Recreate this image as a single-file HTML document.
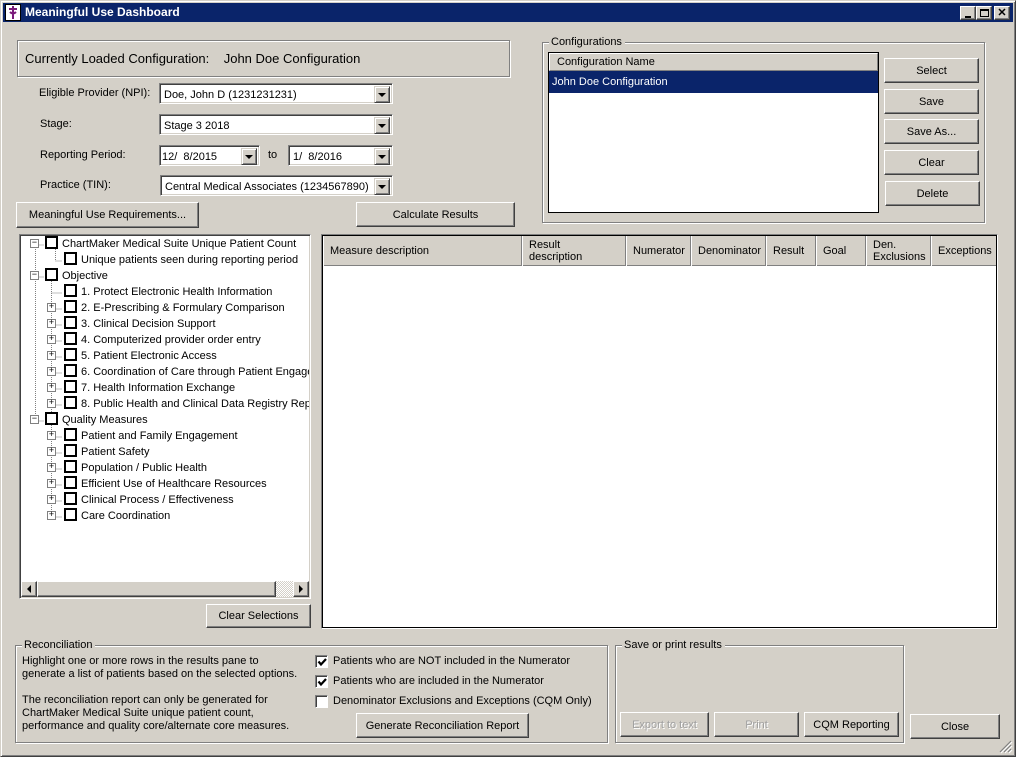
<!DOCTYPE html>
<html><head><meta charset="utf-8">
<style>
*{box-sizing:border-box;margin:0;padding:0}
body{width:1016px;height:757px;background:#d4d0c8;font-family:"Liberation Sans",sans-serif;font-size:11px;color:#000;position:relative;overflow:hidden}
.a{position:absolute}
.win{left:0;top:0;width:1016px;height:757px;border:1px solid;border-color:#d4d0c8 #404040 #404040 #d4d0c8;box-shadow:inset 1px 1px 0 #fff,inset -1px -1px 0 #808080}
.title{left:3px;top:3px;width:1010px;height:19px;background:#0a246a;color:#fff;font-weight:bold;font-size:12px;line-height:19px;padding-left:22px}
.btn{position:absolute;background:#d4d0c8;border:1px solid;border-color:#fff #404040 #404040 #fff;box-shadow:inset -1px -1px 0 #808080;text-align:center;display:flex;align-items:center;justify-content:center;font-size:11px}
.dis{color:#a0a0a0;text-shadow:1px 1px 0 #fff}
.sunk{position:absolute;border:1px solid;border-color:#808080 #fff #fff #808080;box-shadow:inset 1px 1px 0 #404040,inset -1px -1px 0 #d4d0c8;background:#fff}
.combo{height:21px;line-height:20px;padding-left:4px;padding-top:1px}
.dd{position:absolute;right:2px;top:2px;width:16px;height:17px;background:#d4d0c8;border:1px solid;border-color:#d4d0c8 #404040 #404040 #d4d0c8;box-shadow:inset 1px 1px 0 #fff,inset -1px -1px 0 #808080}
.dd:after{content:"";position:absolute;left:3px;top:6px;border-left:4px solid transparent;border-right:4px solid transparent;border-top:4px solid #000}
.grp{position:absolute;border:1px solid #808080;box-shadow:1px 1px 0 #fff,inset 1px 1px 0 #fff}
.gl{position:absolute;background:#d4d0c8;padding:0 3px 0 2px;top:-8px;left:6px;line-height:14px}
.lbl{position:absolute;white-space:nowrap}
.tr{position:absolute;white-space:nowrap;height:16px;line-height:16px}
.cb{display:inline-block;width:13px;height:13px;border:2px solid #000;background:#fff;vertical-align:-2px;margin-right:4px}
.ex{position:absolute;width:9px;height:9px;border:1px solid #808080;background:#fff;font-size:9px;line-height:7px;text-align:center;font-family:"Liberation Mono",monospace}
.hd{position:absolute;top:0;height:30px;border-right:1px solid #808080;box-shadow:1px 0 0 #fff inset;padding-left:7px;display:flex;align-items:center;line-height:12px}
.chk{position:absolute;width:13px;height:13px;background:#fff;border:1px solid;border-color:#808080 #fff #fff #808080;box-shadow:inset 1px 1px 0 #404040}
</style></head><body>
<div class="a win"></div>
<div class="a title">Meaningful Use Dashboard</div>
<div class="a" style="left:5px;top:4px;width:16px;height:17px;background:#fff;border:1px solid #000">
<svg width="14" height="15" viewBox="0 0 14 15"><path d="M7 1V14M3 4H11M4 7Q7 10 10 7" stroke="#7a1a7a" stroke-width="2" fill="none"/></svg></div>
<div class="btn" style="left:960px;top:6px;width:16px;height:14px"><div style="width:6px;height:2px;background:#000;margin-top:7px"></div></div>
<div class="btn" style="left:976px;top:6px;width:16px;height:14px"><div style="width:9px;height:8px;border:1px solid #000;border-top-width:2px"></div></div>
<div class="btn" style="left:994px;top:6px;width:16px;height:14px;font-weight:bold;font-size:11px;line-height:10px">✕</div>

<div class="grp" style="left:17px;top:40px;width:493px;height:37px"></div>
<div class="lbl" style="left:25px;top:51px;font-size:13px">Currently Loaded Configuration:&nbsp;&nbsp;&nbsp; John Doe Configuration</div>

<div class="lbl" style="left:39px;top:87px">Eligible Provider (NPI):</div>
<div class="sunk combo" style="left:159px;top:83px;width:234px">Doe, John D (1231231231)<div class="dd"></div></div>
<div class="lbl" style="left:40px;top:118px">Stage:</div>
<div class="sunk combo" style="left:159px;top:114px;width:234px">Stage 3 2018<div class="dd"></div></div>
<div class="lbl" style="left:40px;top:149px">Reporting Period:</div>
<div class="sunk combo" style="left:159px;top:145px;width:101px;padding-left:2px">12/&nbsp; 8/2015<div class="dd"></div></div>
<div class="lbl" style="left:268px;top:149px">to</div>
<div class="sunk combo" style="left:288px;top:145px;width:105px">1/&nbsp; 8/2016<div class="dd"></div></div>
<div class="lbl" style="left:40px;top:179px">Practice (TIN):</div>
<div class="sunk combo" style="left:160px;top:175px;width:233px">Central Medical Associates (1234567890)<div class="dd"></div></div>

<div class="btn" style="left:16px;top:202px;width:183px;height:26px">Meaningful Use Requirements...</div>
<div class="btn" style="left:356px;top:202px;width:159px;height:25px">Calculate Results</div>

<div class="grp" style="left:542px;top:42px;width:443px;height:181px"><div class="gl">Configurations</div></div>
<div class="a" style="left:548px;top:52px;width:331px;height:161px;border:1px solid #000;background:#fff">
<div class="a" style="left:0;top:0;width:329px;height:18px;background:#d4d0c8;border:1px solid;border-color:#fff #808080 #808080 #fff;padding-left:7px;line-height:16px">Configuration Name</div>
<div class="a" style="left:0;top:18px;width:329px;height:22px;background:#0a246a;color:#fff;padding-left:3px;line-height:22px">John Doe Configuration</div>
</div>
<div class="btn" style="left:884px;top:58px;width:95px;height:25px">Select</div>
<div class="btn" style="left:884px;top:89px;width:95px;height:25px">Save</div>
<div class="btn" style="left:884px;top:119px;width:95px;height:25px">Save As...</div>
<div class="btn" style="left:884px;top:150px;width:95px;height:25px">Clear</div>
<div class="btn" style="left:885px;top:181px;width:95px;height:25px">Delete</div>

<div class="sunk" style="left:19px;top:234px;width:292px;height:365px;overflow:hidden">
<svg class="a" style="left:0;top:0" width="290" height="300">
<g stroke="#808080" stroke-dasharray="1,1" fill="none">
<path d="M15.5 14V186M15.5 10H24M35.5 14V26H42"/>
<path d="M31.5 46V282M31.5 58H42M31.5 74H42M31.5 90H42M31.5 106H42M31.5 122H42M31.5 138H42M31.5 154H42M31.5 170H42"/>
<path d="M31.5 194V282M31.5 202H42M31.5 218H42M31.5 234H42M31.5 250H42M31.5 266H42M31.5 282H42"/>
<path d="M15.5 42H24M15.5 186H24"/>
</g></svg>
</div>
<div class="ex" style="left:30px;top:239px">−</div>
<div class="tr" style="left:45px;top:236px"><span class="cb"></span>ChartMaker Medical Suite Unique Patient Count</div>
<div class="tr" style="left:64px;top:252px"><span class="cb"></span>Unique patients seen during reporting period</div>
<div class="ex" style="left:30px;top:271px">−</div>
<div class="tr" style="left:45px;top:268px"><span class="cb"></span>Objective</div>
<div class="tr" style="left:64px;top:284px"><span class="cb"></span>1. Protect Electronic Health Information</div>
<div class="ex" style="left:47px;top:303px">+</div><div class="tr" style="left:64px;top:300px"><span class="cb"></span>2. E-Prescribing &amp; Formulary Comparison</div>
<div class="ex" style="left:47px;top:319px">+</div><div class="tr" style="left:64px;top:316px"><span class="cb"></span>3. Clinical Decision Support</div>
<div class="ex" style="left:47px;top:335px">+</div><div class="tr" style="left:64px;top:332px"><span class="cb"></span>4. Computerized provider order entry</div>
<div class="ex" style="left:47px;top:351px">+</div><div class="tr" style="left:64px;top:348px"><span class="cb"></span>5. Patient Electronic Access</div>
<div class="ex" style="left:47px;top:367px">+</div><div class="tr" style="left:64px;top:364px;width:245px;overflow:hidden"><span class="cb"></span>6. Coordination of Care through Patient Engagement</div>
<div class="ex" style="left:47px;top:383px">+</div><div class="tr" style="left:64px;top:380px"><span class="cb"></span>7. Health Information Exchange</div>
<div class="ex" style="left:47px;top:399px">+</div><div class="tr" style="left:64px;top:396px;width:245px;overflow:hidden"><span class="cb"></span>8. Public Health and Clinical Data Registry Reporting</div>
<div class="ex" style="left:30px;top:415px">−</div>
<div class="tr" style="left:45px;top:412px"><span class="cb"></span>Quality Measures</div>
<div class="ex" style="left:47px;top:431px">+</div><div class="tr" style="left:64px;top:428px"><span class="cb"></span>Patient and Family Engagement</div>
<div class="ex" style="left:47px;top:447px">+</div><div class="tr" style="left:64px;top:444px"><span class="cb"></span>Patient Safety</div>
<div class="ex" style="left:47px;top:463px">+</div><div class="tr" style="left:64px;top:460px"><span class="cb"></span>Population / Public Health</div>
<div class="ex" style="left:47px;top:479px">+</div><div class="tr" style="left:64px;top:476px"><span class="cb"></span>Efficient Use of Healthcare Resources</div>
<div class="ex" style="left:47px;top:495px">+</div><div class="tr" style="left:64px;top:492px"><span class="cb"></span>Clinical Process / Effectiveness</div>
<div class="ex" style="left:47px;top:511px">+</div><div class="tr" style="left:64px;top:508px"><span class="cb"></span>Care Coordination</div>
<div class="a" style="left:21px;top:581px;width:288px;height:16px;background:repeating-conic-gradient(#d4d0c8 0 25%,#fff 0 50%) 0 0/2px 2px"></div>
<div class="btn" style="left:21px;top:581px;width:16px;height:16px"><div style="border-top:4px solid transparent;border-bottom:4px solid transparent;border-right:4px solid #000"></div></div>
<div class="btn" style="left:37px;top:581px;width:239px;height:16px"></div>
<div class="btn" style="left:293px;top:581px;width:16px;height:16px"><div style="border-top:4px solid transparent;border-bottom:4px solid transparent;border-left:4px solid #000"></div></div>

<div class="btn" style="left:206px;top:604px;width:105px;height:24px">Clear Selections</div>

<div class="a" style="left:321px;top:234px;width:677px;height:395px;border:1px solid;border-color:#808080 #fff #fff #808080"></div>
<div class="a" style="left:322px;top:235px;width:675px;height:393px;border:1px solid #000;background:#fff;overflow:hidden">
<div class="a" style="left:0;top:0;width:675px;height:30px;background:#d4d0c8;border-bottom:1px solid #808080"></div>
<div class="hd" style="left:0;width:199px">Measure description</div>
<div class="hd" style="left:199px;width:104px">Result<br>description</div>
<div class="hd" style="left:303px;width:65px">Numerator</div>
<div class="hd" style="left:368px;width:75px">Denominator</div>
<div class="hd" style="left:443px;width:50px">Result</div>
<div class="hd" style="left:493px;width:50px">Goal</div>
<div class="hd" style="left:543px;width:65px">Den.<br>Exclusions</div>
<div class="hd" style="left:608px;width:66px">Exceptions</div>
</div>

<div class="grp" style="left:15px;top:645px;width:593px;height:98px"><div class="gl">Reconciliation</div></div>
<div class="lbl" style="left:22px;top:655px;line-height:13px">Highlight one or more rows in the results pane to<br>generate a list of patients based on the selected options.<br><br>The reconciliation report can only be generated for<br>ChartMaker Medical Suite unique patient count,<br>performance and quality core/alternate core measures.</div>
<div class="chk" style="left:315px;top:655px"><svg width="11" height="11" style="position:absolute;left:1px;top:1px"><path d="M1.5 4.5L4 7.5L9 2" stroke="#000" stroke-width="2.2" fill="none"/></svg></div>
<div class="lbl" style="left:333px;top:655px">Patients who are NOT included in the Numerator</div>
<div class="chk" style="left:315px;top:675px"><svg width="11" height="11" style="position:absolute;left:1px;top:1px"><path d="M1.5 4.5L4 7.5L9 2" stroke="#000" stroke-width="2.2" fill="none"/></svg></div>
<div class="lbl" style="left:333px;top:675px">Patients who are included in the Numerator</div>
<div class="chk" style="left:315px;top:695px"></div>
<div class="lbl" style="left:333px;top:695px">Denominator Exclusions and Exceptions (CQM Only)</div>
<div class="btn" style="left:356px;top:713px;width:173px;height:25px">Generate Reconciliation Report</div>

<div class="grp" style="left:615px;top:645px;width:289px;height:98px"><div class="gl">Save or print results</div></div>
<div class="btn dis" style="left:620px;top:712px;width:89px;height:25px">Export to text</div>
<div class="btn dis" style="left:714px;top:712px;width:85px;height:25px">Print</div>
<div class="btn" style="left:804px;top:712px;width:95px;height:25px">CQM Reporting</div>
<div class="btn" style="left:910px;top:714px;width:90px;height:25px">Close</div>
<svg class="a" style="left:999px;top:740px" width="14" height="14"><path d="M12 1L1 12M12 5L5 12M12 9L9 12" stroke="#808080" stroke-width="1.2"/><path d="M13 2L2 13M13 6L6 13M13 10L10 13" stroke="#fff" stroke-width="1"/></svg>
</body></html>
